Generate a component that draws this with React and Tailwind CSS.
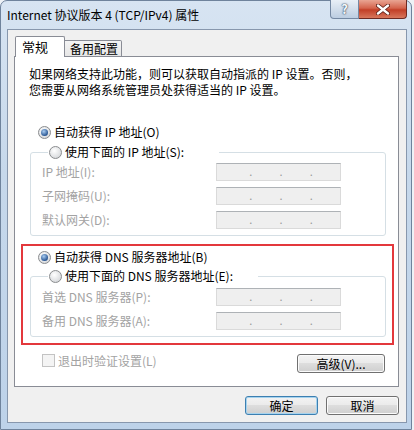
import React from "react";

const Radio = ({ checked }) => (
    <span className="w-[13px] h-[13px] shrink-0 rounded-full border border-[#8a8c8e] bg-[radial-gradient(circle_at_40%_35%,#ffffff,#d6d8db_80%)] flex items-center justify-center">
        {checked && (
            <span className="w-[7px] h-[7px] rounded-full bg-[radial-gradient(circle_at_40%_35%,#a9cdf2,#1f4d8c_75%)]" />
        )}
    </span>
);

const IpBox = () => (
    <div className="w-[125px] h-[18px] bg-[#efefef] border border-[#dadada] border-t-[#aeb2b6] flex pl-[2px] text-[#9a9a9a]">
        {[0, 1, 2, 3].map((i) => (
            <span key={i} className="w-[31px] text-[11px] leading-[15px]">{i > 0 ? "." : ""}</span>
        ))}
    </div>
);

const GroupRow = ({ label }) => (
    <div className="flex items-center h-[18px]">
        <span className="w-[174px] text-[#a3a3a3] leading-[18px] whitespace-nowrap">{label}</span>
        <IpBox />
    </div>
);

const Group = ({ legend, rows, top, lw }) => (
    <fieldset className="border border-[#d5dfe5] rounded-[3px] pl-[11px] pb-[6px]">
        <legend className={`ml-[6px] pl-[1px] h-[16px] ${lw}`}>
            <div className="flex items-center gap-[3px] h-[16px] leading-[16px] whitespace-nowrap">
                <Radio />
                <span>{legend}</span>
            </div>
        </legend>
        <div className={`flex flex-col gap-[6px] ${top}`}>
            {rows.map((r) => (
                <GroupRow key={r} label={r} />
            ))}
        </div>
    </fieldset>
);

const Button = ({ children, w, primary }) => (
    <button
        className={`${w} h-[19px] rounded-[3px] border leading-[17px] text-[12px] bg-[linear-gradient(#f3f3f3,#ebebeb_45%,#dddddd_50%,#cfcfcf)] ${
            primary
                ? "border-[#3c7fb1] shadow-[inset_0_0_0_1px_#a6d3ee]"
                : "border-[#707070] shadow-[inset_0_0_0_1px_#fbfbfb]"
        }`}
    >
        {children}
    </button>
);

export default function App() {
    return (
        <div className="w-[414px] h-[430px] bg-[#eef2f6] overflow-hidden font-['Noto_Sans_CJK_SC','Noto_Sans',sans-serif] text-[12px] text-black">
            <div className="w-[412px] h-[430px] flex flex-col rounded-t-[7px] border border-[#6f839c] bg-[linear-gradient(#d7e4f2,#c6d8eb_40%,#bdd2e9)]">
                {/* title bar */}
                <div className="h-[28px] flex items-start shrink-0">
                    <span className="pl-[6px] pt-[6px] leading-[16px] text-[12px]">Internet 协议版本 4 (TCP/IPv4) 属性</span>
                    <div className="ml-auto mr-[4px] flex -mt-px">
                        <div className="w-[29px] h-[19px] rounded-bl-[4px] border border-[#7488a2] border-t-0 bg-[linear-gradient(#e9eff6,#d2deeb_50%,#bccde1)] flex items-center justify-center text-[13px] font-bold text-[#f5f7fa] [text-shadow:0_0_2px_#2d3e55,0_0_1px_#2d3e55]">
                            ?
                        </div>
                        <div className="w-[48px] h-[19px] rounded-br-[4px] border border-l-0 border-[#6e2a22] border-t-0 bg-[linear-gradient(#e9a593,#d4644d_45%,#c23f27_55%,#d8775c)] flex items-center justify-center">
                            <svg width="14" height="11" viewBox="0 0 14 11">
                                <path d="M2 1.5 L12 9.5 M12 1.5 L2 9.5" stroke="#5a1d14" strokeWidth="4" strokeLinecap="round" />
                                <path d="M2 1.5 L12 9.5 M12 1.5 L2 9.5" stroke="#ffffff" strokeWidth="2.4" strokeLinecap="round" />
                            </svg>
                        </div>
                    </div>
                </div>

                {/* client */}
                <div className="ml-[6px] w-[400px] h-[394px] border border-[#8797ad] bg-[#f0f0f0] flex flex-col pt-[6px]">
                    <div className="flex items-end h-[21px] ml-[7px] relative z-10">
                        <div className="w-[50px] h-[21px] bg-white border border-b-0 border-[#898c95] rounded-t-[2px] pl-[6px] leading-[19px] text-[13px]">
                            常规
                        </div>
                        <div className="w-[57px] h-[17px] bg-[linear-gradient(#f4f4f4,#e6e6e6)] border border-l-0 border-[#898c95] rounded-tr-[2px] pl-[5px] leading-[16px] text-[12px]">
                            备用配置
                        </div>
                    </div>

                    <div className="-mt-px ml-[6px] w-[385px] h-[331px] border border-[#898c95] bg-white flex flex-col">
                        <div className="pl-[14px] pt-[9px] leading-[16px] whitespace-nowrap">
                            <p>如果网络支持此功能，则可以获取自动指派的 IP 设置。否则，</p>
                            <p>您需要从网络系统管理员处获得适当的 IP 设置。</p>
                        </div>

                        <div className="mt-[26px] pl-[23px] flex items-center gap-[3px] h-[16px] leading-[16px]">
                            <Radio checked />
                            <span>自动获得 IP 地址(O)</span>
                        </div>

                        <div className="mt-[4px] ml-[15px] mr-[12px]">
                            <Group
                                legend="使用下面的 IP 地址(S):"
                                rows={["IP 地址(I):", "子网掩码(U):", "默认网关(D):"]}
                                top="pt-[3px]"
                                lw="w-[171px]"
                            />
                        </div>

                        <div className="mt-[8px] ml-[6px] mr-[4px] border-2 border-[#e3383c] pt-[3px] pb-[6px]">
                            <div className="pl-[15px] flex items-center gap-[3px] h-[16px] leading-[16px]">
                                <Radio checked />
                                <span>自动获得 DNS 服务器地址(B)</span>
                            </div>
                            <div className="mt-[3px] ml-[7px] mr-[6px]">
                                <Group
                                    legend="使用下面的 DNS 服务器地址(E):"
                                    rows={["首选 DNS 服务器(P):", "备用 DNS 服务器(A):"]}
                                    top="pt-[4px]"
                                    lw="w-[210px]"
                                />
                            </div>
                        </div>

                        <div className="mt-[9px] flex items-start pl-[27px] pr-[13px]">
                            <div className="flex items-center gap-[3px] h-[13px]">
                                <span className="w-[13px] h-[13px] border border-[#c3c3c3] bg-[#f4f4f4]" />
                                <span className="text-[#a3a3a3] leading-[13px]">退出时验证设置(L)</span>
                            </div>
                            <div className="ml-auto">
                                <Button w="w-[88px]">高级(V)...</Button>
                            </div>
                        </div>
                    </div>

                    <div className="mt-[9px] flex justify-end gap-[8px] pr-[7px]">
                        <Button w="w-[73px]" primary>确定</Button>
                        <Button w="w-[73px]">取消</Button>
                    </div>
                </div>
            </div>
        </div>
    );
}
